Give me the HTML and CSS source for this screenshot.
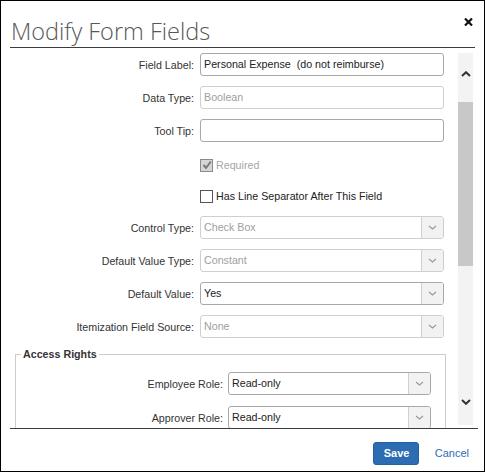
FILE: index.html
```html
<!DOCTYPE html>
<html lang="en">
<head>
<meta charset="utf-8">
<title>Modify Form Fields</title>
<link rel="stylesheet" href="styles.css">
</head>
<body>
<div class="dialog">
  <div class="head">
    <h1 class="title">Modify Form Fields</h1>
    <span class="close"><svg width="9" height="8" viewBox="0 0 9 8"><path d="M1 0.5 L8 7.5 M8 0.5 L1 7.5" stroke="#111" stroke-width="2.2" fill="none"/></svg></span>
  </div>
  <div class="body">
    <div class="form">
      <div class="grid">
        <span class="lbl">Field Label:</span>
        <div class="input">Personal Expense  (do not reimburse)</div>

        <span class="lbl">Data Type:</span>
        <div class="input disabled">Boolean</div>

        <span class="lbl">Tool Tip:</span>
        <div class="input"></div>

        <span></span>
        <div class="cb-row muted req"><span class="cb checked"><svg width="10" height="10" viewBox="0 0 10 10"><path d="M1.5 5 L4 8 L8.8 1.5" stroke="#7a7a7a" stroke-width="2" fill="none"/></svg></span>Required</div>

        <span></span>
        <div class="cb-row sep"><span class="cb"></span>Has Line Separator After This Field</div>

        <span class="lbl">Control Type:</span>
        <div class="select disabled"><span class="value">Check Box</span><span class="caret"><svg width="9" height="5" viewBox="0 0 9 5"><path d="M1 1 L4.5 4 L8 1" stroke="#9a9a9a" stroke-width="1.2" fill="none"/></svg></span></div>

        <span class="lbl">Default Value Type:</span>
        <div class="select disabled"><span class="value">Constant</span><span class="caret"><svg width="9" height="5" viewBox="0 0 9 5"><path d="M1 1 L4.5 4 L8 1" stroke="#9a9a9a" stroke-width="1.2" fill="none"/></svg></span></div>

        <span class="lbl">Default Value:</span>
        <div class="select"><span class="value">Yes</span><span class="caret"><svg width="9" height="5" viewBox="0 0 9 5"><path d="M1 1 L4.5 4 L8 1" stroke="#9a9a9a" stroke-width="1.2" fill="none"/></svg></span></div>

        <span class="lbl">Itemization Field Source:</span>
        <div class="select disabled"><span class="value">None</span><span class="caret"><svg width="9" height="5" viewBox="0 0 9 5"><path d="M1 1 L4.5 4 L8 1" stroke="#9a9a9a" stroke-width="1.2" fill="none"/></svg></span></div>
      </div>

      <fieldset class="rights">
        <legend>Access Rights</legend>
        <div class="grid2">
          <span class="lbl">Employee Role:</span>
          <div class="select"><span class="value">Read-only</span><span class="caret"><svg width="9" height="5" viewBox="0 0 9 5"><path d="M1 1 L4.5 4 L8 1" stroke="#9a9a9a" stroke-width="1.2" fill="none"/></svg></span></div>

          <span class="lbl">Approver Role:</span>
          <div class="select"><span class="value">Read-only</span><span class="caret"><svg width="9" height="5" viewBox="0 0 9 5"><path d="M1 1 L4.5 4 L8 1" stroke="#9a9a9a" stroke-width="1.2" fill="none"/></svg></span></div>
        </div>
      </fieldset>
    </div>
    <div class="scrollbar">
      <div class="sb-up"><svg width="10" height="6" viewBox="0 0 10 6"><path d="M1 5 L5 1.2 L9 5" stroke="#333" stroke-width="2" fill="none"/></svg></div>
      <div class="thumb"></div>
      <div class="sb-down"><svg width="10" height="6" viewBox="0 0 10 6"><path d="M1 1 L5 4.8 L9 1" stroke="#333" stroke-width="2" fill="none"/></svg></div>
    </div>
  </div>
  <div class="foot">
    <button class="save" type="button">Save</button>
    <a class="cancel">Cancel</a>
  </div>
</div>
</body>
</html>
```

FILE: styles.css
```css
html, body {
  margin: 0;
  padding: 0;
  background: #fff;
}

.dialog {
  width: 485px;
  height: 472px;
  box-sizing: border-box;
  border: 1px solid #000;
  background: #fff;
  font-family: "Liberation Sans", Arial, sans-serif;
  display: flex;
  flex-direction: column;
  overflow: hidden;
}

.head {
  flex: none;
  margin: 0 9px;
  height: 46px;
  border-bottom: 1px solid #3c3c3c;
  display: flex;
  justify-content: space-between;
  align-items: flex-start;
}

.title {
  margin: 0;
  padding: 14px 0 0 1px;
  font-family: "Open Sans", sans-serif;
  font-weight: 300;
  font-size: 23.5px;
  line-height: 32px;
  color: #585858;
}

.close {
  display: block;
  margin: 17px 2px 0 0;
  line-height: 0;
}

.body {
  flex: none;
  height: 380px;
  display: flex;
  overflow: hidden;
}

.form {
  flex: none;
  width: 445px;
  padding-top: 5px;
}

.grid {
  display: grid;
  grid-template-columns: 193px 244px;
  grid-template-rows: 23px 23px 23px 22px 22px 23px 23px 23px 23px;
  column-gap: 6px;
  row-gap: 10px;
}

.lbl {
  align-self: center;
  text-align: right;
  font-size: 10.7px;
  color: #333;
  white-space: nowrap;
}

.input {
  box-sizing: border-box;
  height: 23px;
  border: 1px solid #a8a8a8;
  border-radius: 3px;
  padding: 0 3px;
  font-size: 10.7px;
  line-height: 21px;
  color: #222;
  white-space: pre;
}

.input.disabled {
  border-color: #cfcfcf;
  color: #a0a0a0;
}

.select {
  box-sizing: border-box;
  height: 23px;
  border: 1px solid #a8a8a8;
  border-radius: 3px;
  display: flex;
  font-size: 10.7px;
  color: #222;
  overflow: hidden;
}

.select.disabled {
  border-color: #cfcfcf;
  color: #a0a0a0;
}

.value {
  flex: 1;
  padding: 0 3px;
  line-height: 21px;
}

.caret {
  flex: none;
  width: 21px;
  border-left: 1px solid #d0d0d0;
  background: #f2f2f2;
  display: flex;
  align-items: center;
  justify-content: center;
}

.cb-row {
  display: flex;
  align-items: center;
  gap: 3px;
  font-size: 10.7px;
  color: #222;
  box-sizing: border-box;
}

.cb-row.req {
  padding-top: 4px;
}

.cb-row.sep {
  padding-top: 2px;
}

.cb-row.muted {
  color: #a6a6a6;
}

.cb {
  box-sizing: border-box;
  width: 13px;
  height: 13px;
  border: 1px solid #555;
  background: #fff;
  display: flex;
  align-items: center;
  justify-content: center;
}

.cb.checked {
  border-color: #8a8a8a;
  background: #d6d6d6;
}

.rights {
  margin: 10px 0 0 14px;
  width: 431px;
  min-width: 0;
  box-sizing: border-box;
  border: 1px solid #cccccc;
  padding: 11px 0 20px 0;
}

.rights legend {
  margin-left: 5px;
  padding: 0 2px;
  font-size: 10.7px;
  font-weight: bold;
  line-height: 13px;
  color: #333;
}

.grid2 {
  display: grid;
  grid-template-columns: 207px 203px;
  grid-auto-rows: 23px;
  column-gap: 5px;
  row-gap: 11px;
}

.scrollbar {
  flex: none;
  margin: 5px 0 0 12px;
  width: 15px;
  height: 372px;
  background: #f3f3f3;
  display: flex;
  flex-direction: column;
  align-items: center;
}

.sb-up {
  flex: none;
  height: 49px;
  box-sizing: border-box;
  padding-top: 18px;
  line-height: 0;
}

.thumb {
  flex: none;
  width: 15px;
  height: 164px;
  background: #c8c8c8;
}

.sb-down {
  flex: 1;
  display: flex;
  align-items: flex-end;
  padding-bottom: 20px;
  line-height: 0;
}

.foot {
  flex: 1;
  margin: 0 6px 0 9px;
  border-top: 1px solid #3c3c3c;
  display: flex;
  justify-content: flex-end;
  align-items: flex-start;
  gap: 16px;
  padding: 13px 9px 0 0;
}

.save {
  height: 23px;
  padding: 0 10px;
  width: 46px;
  box-sizing: border-box;
  border: 1px solid #2461a3;
  border-radius: 3px;
  background: #2b6cb3;
  color: #fff;
  font-family: "Liberation Sans", Arial, sans-serif;
  font-weight: bold;
  font-size: 11px;
  line-height: 21px;
  cursor: pointer;
}

.cancel {
  font-size: 11px;
  line-height: 23px;
  color: #2e6db4;
  cursor: pointer;
}
```
